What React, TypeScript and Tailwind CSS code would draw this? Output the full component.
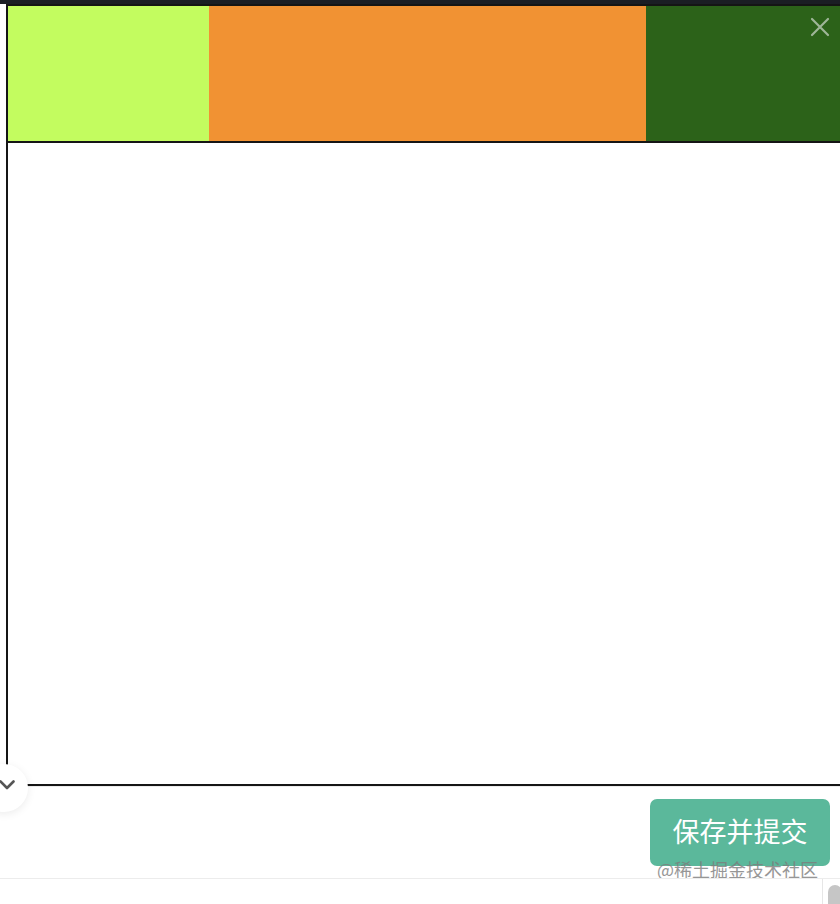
import React from "react";

const Swatch = ({ color, width }: { color: string; width: string }) => (
  <div className={`${color} ${width} h-full`} />
);

export default function App() {
  return (
    <div
      className="relative w-[840px] h-[904px] overflow-hidden bg-white"
      style={{ fontFamily: '"Noto Sans CJK SC", "Noto Sans", sans-serif' }}
    >
      {/* top dark bar */}
      <div className="h-[4px] bg-[#1b1e24]" />

      {/* canvas box */}
      <div className="ml-[6px] h-[782px] border-2 border-r-0 border-[#151515] flex flex-col">
        <div className="relative h-[137px] flex border-b-2 border-[#151515]">
          <Swatch color="bg-[#c3fc5f]" width="w-[201px]" />
          <Swatch color="bg-[#f19233]" width="w-[437px]" />
          <Swatch color="bg-[#2c6219]" width="flex-1" />
          <button className="absolute right-[10px] top-[11px] w-[20px] h-[20px] text-[#9fb598]">
            <svg viewBox="0 0 20 20" width="20" height="20">
              <path
                d="M2 2 L18 18 M18 2 L2 18"
                stroke="currentColor"
                strokeWidth="2.2"
                strokeLinecap="round"
                fill="none"
              />
            </svg>
          </button>
        </div>
        <div className="flex-1" />
      </div>
      <div className="h-px bg-[#ececec] ml-[6px]" />

      {/* collapse toggle */}
      <div className="absolute left-[-20px] top-[764px] w-[48px] h-[48px] rounded-full bg-white shadow-[0_2px_8px_rgba(0,0,0,0.08)] flex items-center justify-end pr-[13px] pb-[6px]">
        <svg viewBox="0 0 16 10" width="16" height="10">
          <path
            d="M1.5 1.5 L8 8 L14.5 1.5"
            stroke="#555"
            strokeWidth="2.6"
            fill="none"
            strokeLinecap="round"
            strokeLinejoin="round"
          />
        </svg>
      </div>

      {/* footer */}
      <div className="flex justify-end pr-[10px] pt-[12px]">
        <button className="w-[180px] h-[67px] rounded-[7px] bg-[#5bb89b] text-white text-[27px] font-normal pb-[2px]">
          保存并提交
        </button>
      </div>
      <div className="absolute left-[657px] top-[856px] text-[18px] leading-[26px] text-[#7d7d7d] opacity-80">
        @稀土掘金技术社区
      </div>

      {/* bottom bar */}
      <div className="absolute left-0 right-0 top-[878px] h-[26px] border-t border-[#ececec] bg-white flex justify-end">
        <div className="w-[18px] h-full border-l border-[#e6e6e6] pl-[5px] pt-[6px]">
          <div className="w-[14px] h-[30px] rounded-[7px] bg-[#c6c6c6]" />
        </div>
      </div>
    </div>
  );
}
